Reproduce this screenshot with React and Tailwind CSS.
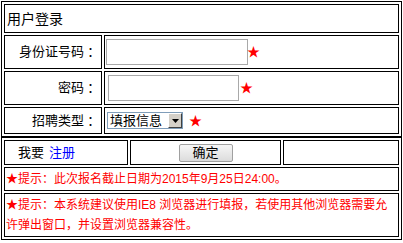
export default function App() {
  const font = { fontFamily: '"Liberation Sans", "Noto Sans CJK SC", sans-serif' };
  const colon = { fontFamily: '"Noto Sans CJK TC", sans-serif' };
  const cell = "border border-black";
  return (
    <div className="bg-white w-[403px] h-[243px] pl-[1px] pt-[1px] text-black" style={font}>
      {/* Table A */}
      <div className="w-[401px] border border-black p-[2px] flex flex-col gap-[2px]">
        <div className={`${cell} h-[29px] flex items-center px-[1px] text-[14px] leading-none`}>
          <span className="pl-[1px]">用户登录</span>
        </div>
        <div className="flex gap-[2px] h-[34px]">
          <div className={`${cell} w-[98px] flex items-center justify-end pr-[4px] text-[13px]`}>
            身份证号码<span style={colon}>：</span>
          </div>
          <div className={`${cell} flex-1 flex items-center pl-[1px]`}>
            <div className="w-[142px] h-[26px] border border-[#a9a9a9] bg-white" />
            <span className="text-[13px] ml-[-1px] text-[#ff0000]">★</span>
          </div>
        </div>
        <div className="flex gap-[2px] h-[34px]">
          <div className={`${cell} w-[98px] flex items-center justify-end pr-[4px] text-[13px]`}>
            密码<span style={colon}>：</span>
          </div>
          <div className={`${cell} flex-1 flex items-center pl-[3px]`}>
            <div className="w-[131px] h-[26px] border border-[#a9a9a9] bg-white" />
            <span className="text-[13px] ml-[1px] text-[#ff0000]">★</span>
          </div>
        </div>
        <div className="flex gap-[2px] h-[27px]">
          <div className={`${cell} w-[98px] flex items-center justify-end pr-[4px] text-[13px]`}>
            招聘类型<span style={colon}>：</span>
          </div>
          <div className={`${cell} flex-1 flex items-center pl-[2px]`}>
            <div className="w-[76px] h-[17px] border border-[#7f9db9] flex items-center bg-white">
              <span className="flex-1 text-[13px] leading-none pl-[2px]">填报信息</span>
              <div className="w-[14px] h-[15px] bg-[#d4d0c8] border border-t-white border-l-white border-r-[#404040] border-b-[#404040] flex items-center justify-center">
                <svg width="7" height="4" viewBox="0 0 7 4"><path d="M0 0H7L3.5 4Z" fill="#000" /></svg>
              </div>
            </div>
            <span className="text-[13px] ml-[6px] text-[#ff0000]">★</span>
          </div>
        </div>
      </div>
      {/* Table B */}
      <div className="w-[401px] border border-black p-[2px] flex flex-col gap-[2px]">
        <div className="flex gap-[2px] h-[25px]">
          <div className={`${cell} w-[124px] flex items-center pl-[13px] text-[13px]`}>
            <span>我要</span>
            <span className="ml-[5px] text-[#0000ff]">注册</span>
          </div>
          <div className={`${cell} w-[151px] flex items-center justify-center`}>
            <div className="w-[54px] h-[18px] border border-[#a0a0a0] rounded-[2px] bg-gradient-to-b from-[#f6f6f6] to-[#dcdcdc] flex items-center justify-center text-[13px] leading-none">
              确定
            </div>
          </div>
          <div className={`${cell} flex-1`} />
        </div>
        <div className={`${cell} h-[24px] flex items-center px-[1px] text-[12px] text-[#ff0000]`}>
          ★提示：此次报名截止日期为2015年9月25日24:00。
        </div>
        <div className={`${cell} h-[44px] flex items-center px-[1px] text-[12px] leading-[20px] text-[#ff0000]`}>
          <span>★提示：本系统建议使用IE8 浏览器进行填报，若使用其他浏览器需要允许弹出窗口，并设置浏览器兼容性。</span>
        </div>
      </div>
    </div>
  );
}
